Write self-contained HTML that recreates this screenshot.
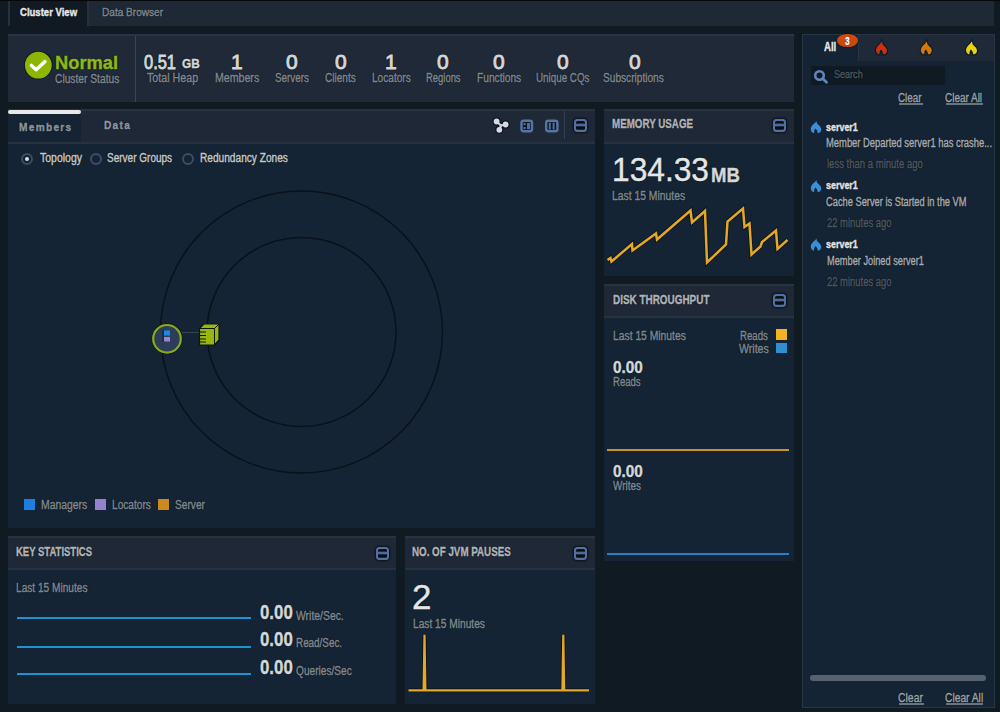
<!DOCTYPE html><html><head><meta charset="utf-8"><style>
*{margin:0;padding:0;box-sizing:border-box}
html,body{width:1000px;height:712px;overflow:hidden;background:#101a22;font-family:"Liberation Sans",sans-serif}
.a{position:absolute}
.t{position:absolute;white-space:nowrap;line-height:1;transform-origin:0 0;text-shadow:0 0 1.5px rgba(0,0,0,.9),0 0 1px rgba(0,0,0,.6);-webkit-text-stroke:0.4px currentColor}
.min{position:absolute;width:13.2px;height:13px;border:2.4px solid #5271a2;border-radius:3.5px;box-shadow:0 0 2px 0.5px rgba(0,0,0,.6);background:linear-gradient(to bottom,#1c2636 0,#080b0e 0.8px,#080b0e 2.4px,#3a5078 2.6px,#4d6a98 3px,#4d6a98 5px,#3a5078 5.4px,#080b0e 5.6px,#080b0e 7.4px,#1c2636 8.2px)}

</style></head><body>
<!-- STATIC SHAPES -->
<!-- top tab bar -->
<div class="a" style="left:0;top:0;width:1000px;height:1.2px;background:#05080b"></div>
<div class="a" style="left:8px;top:1.2px;width:986px;height:25.3px;background:#1f2935"></div>
<div class="a" style="left:7.5px;top:1.2px;width:81.5px;height:25.3px;background:#111a22;border-left:2.5px solid #27313c;border-right:2.5px solid #27313c"></div>
<!-- status bar -->
<div class="a" style="left:8px;top:34px;width:786px;height:68px;background:#1f2937;border-top:2px solid #2a3543"></div>
<div class="a" style="left:135px;top:36px;width:1px;height:66px;background:#3a4654"></div>
<svg class="a" style="left:0;top:0" width="60" height="90">
<circle cx="38.3" cy="65.2" r="14.3" fill="#0c1530"/>
<circle cx="38.3" cy="65.2" r="13.4" fill="#8db600"/>
<polyline points="31.4,65.4 36.2,69.8 45,61.6" fill="none" stroke="#fff" stroke-width="3.4" stroke-linecap="round" stroke-linejoin="round"/>
</svg>
<!-- members panel -->
<div class="a" style="left:8px;top:109px;width:587px;height:419px;background:#152434"></div>
<div class="a" style="left:8px;top:109px;width:587px;height:35px;background:#1e2836;border-top:2px solid #283340;border-bottom:2px solid #263240"></div>
<div class="a" style="left:8px;top:110px;width:73px;height:4px;background:#e8e8e8;border-radius:2px"></div>
<div class="a" style="left:8px;top:114px;width:73px;height:28px;background:#152434"></div>
<div class="a" style="left:564px;top:111px;width:1px;height:28px;background:#334050"></div>
<div class="min" style="left:574px;top:119.3px"></div>
<div class="a" style="left:21px;top:152.5px;width:12px;height:12px;border-radius:50%;border:2px solid #3c4d66"></div>
<div class="a" style="left:25px;top:156.5px;width:4px;height:4px;border-radius:50%;background:#dde"></div>
<div class="a" style="left:90px;top:152.5px;width:12px;height:12px;border-radius:50%;border:2px solid #3c4d66"></div>
<div class="a" style="left:182px;top:152.5px;width:12px;height:12px;border-radius:50%;border:2px solid #3c4d66"></div>
<svg class="a" style="left:0;top:0" width="600" height="530">
<circle cx="301.5" cy="332" r="141" fill="none" stroke="#09111a" stroke-width="1.5"/>
<circle cx="301.5" cy="332" r="94.5" fill="none" stroke="#09111a" stroke-width="1.5"/>
<line x1="182" y1="332.5" x2="200" y2="332.5" stroke="#3a4550" stroke-width="1"/>
<circle cx="167" cy="338.8" r="15.5" fill="#0b1420"/>
<circle cx="167" cy="338.8" r="13.8" fill="#2c3d5a" stroke="#8aaa1c" stroke-width="2.2"/>
<rect x="162" y="330" width="2" height="12" fill="#1e2c40"/>
<rect x="164" y="330.5" width="6" height="5" fill="#1a86f0"/>
<rect x="164" y="337" width="6" height="4.5" fill="#9a85d3"/>
<path d="M199.5 328.5 L204 324 L219 324 L219 340 L214.5 345 L199.5 345 Z" fill="#98b80e" stroke="#0b141b" stroke-width="1.2" stroke-linejoin="round"/>
<path d="M214.5 328.5 L219 324 M214.5 328.5 L214.5 345 M199.5 328.5 L214.5 328.5" stroke="#0b141b" stroke-width="1" fill="none"/>
<path d="M199.5 332 L206 332 M199.5 335.5 L206 335.5 M199.5 339 L206 339 M199.5 342 L206 342" stroke="#0b141b" stroke-width="1" fill="none"/>
</svg>
<div class="a" style="left:24px;top:499px;width:10.5px;height:10.5px;background:#1b80e0"></div>
<div class="a" style="left:95px;top:499px;width:10.5px;height:10.5px;background:#9482cc"></div>
<div class="a" style="left:158px;top:499px;width:10.5px;height:10.5px;background:#cc8a1c"></div>
<!-- memory usage -->
<div class="a" style="left:604px;top:109px;width:190px;height:167px;background:#152434"></div>
<div class="a" style="left:604px;top:109px;width:190px;height:35px;background:#1e2836;border-top:2px solid #283340;border-bottom:2px solid #263240"></div>
<div class="min" style="left:772.8px;top:119.3px"></div>
<svg class="a" style="left:0;top:0" width="800" height="280">
<polyline fill="none" stroke="#0a1220" stroke-width="4.4" stroke-linejoin="miter" stroke-miterlimit="10" opacity="0.8" points="607.5,260 610.5,258 611.5,261.5 632,244 632.5,250.5 656,233.5 657,239.5 690.5,210.5 692,222.5 705,211 707,262.5 726,244.5 727.5,221.5 743,208.5 744.5,227 749.5,223.5 751.5,254.5 760.5,246.5 762,242 776,230.5 777.5,249 787.5,240"/>
<polyline fill="none" stroke="#e5a822" stroke-width="2.5" stroke-linejoin="miter" stroke-miterlimit="10" points="607.5,260 610.5,258 611.5,261.5 632,244 632.5,250.5 656,233.5 657,239.5 690.5,210.5 692,222.5 705,211 707,262.5 726,244.5 727.5,221.5 743,208.5 744.5,227 749.5,223.5 751.5,254.5 760.5,246.5 762,242 776,230.5 777.5,249 787.5,240"/>
</svg>
<!-- disk throughput -->
<div class="a" style="left:604px;top:284px;width:190px;height:277px;background:#152434"></div>
<div class="a" style="left:604px;top:284px;width:190px;height:34px;background:#1e2836;border-top:2px solid #283340;border-bottom:2px solid #263240"></div>
<div class="min" style="left:772.8px;top:293.8px"></div>
<div class="a" style="left:776px;top:329px;width:10.5px;height:10.5px;background:#f0b323"></div>
<div class="a" style="left:776px;top:342.5px;width:10.5px;height:10px;background:#2f8fd0"></div>
<div class="a" style="left:607px;top:449px;width:182px;height:2px;background:#c99423"></div>
<div class="a" style="left:607px;top:553px;width:182px;height:2px;background:#2a7fc0"></div>
<!-- key statistics -->
<div class="a" style="left:8px;top:536px;width:388px;height:168px;background:#152434"></div>
<div class="a" style="left:8px;top:536px;width:388px;height:34px;background:#1e2836;border-top:2px solid #283340;border-bottom:2px solid #263240"></div>
<div class="min" style="left:375.5px;top:546.8px"></div>
<div class="a" style="left:17px;top:617px;width:234px;height:2px;background:#1b95d2"></div>
<div class="a" style="left:17px;top:646px;width:234px;height:2px;background:#1b95d2"></div>
<div class="a" style="left:17px;top:673px;width:234px;height:2px;background:#1b95d2"></div>
<!-- jvm pauses -->
<div class="a" style="left:405px;top:536px;width:190px;height:168px;background:#152434"></div>
<div class="a" style="left:405px;top:536px;width:190px;height:34px;background:#1e2836;border-top:2px solid #283340;border-bottom:2px solid #263240"></div>
<div class="min" style="left:573.9px;top:546.8px"></div>
<svg class="a" style="left:0;top:0" width="600" height="712">
<polyline fill="none" stroke="#0a1220" stroke-width="4" stroke-miterlimit="40" points="408.5,690.3 423.6,690.3 424.5,634.8 425.4,690.3 562.4,690.3 563.3,634.8 564.2,690.3 589,690.3"/>
<polyline fill="none" stroke="#e3a824" stroke-width="2.2" stroke-miterlimit="40" points="408.5,690.3 423.6,690.3 424.5,634.8 425.4,690.3 562.4,690.3 563.3,634.8 564.2,690.3 589,690.3"/>
</svg>
<!-- alerts panel -->
<div class="a" style="left:802px;top:33.5px;width:193px;height:674.5px;background:#152434;border:1.5px solid #283644"></div>
<div class="a" style="left:857.5px;top:35px;width:136px;height:25.6px;background:#1f2937;border-left:1px solid #283442"></div>
<div class="a" style="left:837px;top:34px;width:20.5px;height:12.8px;border-radius:50%;background:#cf4a0a;box-shadow:0 0 1.5px 0.5px rgba(5,20,30,.8)"></div>
<div class="a" style="left:811px;top:66px;width:134px;height:19px;background:#0f1a23"></div>
<div class="a" style="left:899px;top:103px;width:24px;height:2px;background:#6a747e"></div>
<div class="a" style="left:945.5px;top:103px;width:37.5px;height:2px;background:#6a747e"></div>
<div class="a" style="left:810px;top:675px;width:176px;height:6px;border-radius:3px;background:#56636e"></div>
<div class="a" style="left:898.5px;top:703px;width:25px;height:2px;background:#6a747e"></div>
<div class="a" style="left:945.5px;top:703px;width:37.5px;height:2px;background:#6a747e"></div>
<svg class="a" style="left:0;top:0" width="1000" height="712">
<defs><path id="fl" d="M5.7 0 C6.3 1.2 6.4 2.6 7 3.4 C9 5.3 11 7 11 9.3 C11 11.3 9.8 12.6 8.5 13 L7.2 13 C7.2 11.4 6.3 9.6 4.9 8.3 C3.8 9.6 3.3 11.4 3.5 13 L2.5 13 C1 12.3 0 10.8 0 8.8 C0 6.2 2.2 4.2 3.6 2.9 C4.6 2 5.4 1 5.7 0 Z"/></defs>
<g transform="translate(876,41.3)"><use href="#fl" fill="none" stroke="#0b1a28" stroke-width="2.2"/><use href="#fl" fill="#c8320e"/></g>
<g transform="translate(920.8,41.3)"><use href="#fl" fill="none" stroke="#0b1a28" stroke-width="2.2"/><use href="#fl" fill="#d5780c"/></g>
<g transform="translate(966,41.3)"><use href="#fl" fill="none" stroke="#0b1a28" stroke-width="2.2"/><use href="#fl" fill="#e8d213"/></g>
<g transform="translate(810.8,120.9) scale(0.95,0.93)"><use href="#fl" fill="#3a8fd6"/></g>
<g transform="translate(810.8,179.9) scale(0.95,0.93)"><use href="#fl" fill="#3a8fd6"/></g>
<g transform="translate(810.8,238.4) scale(0.95,0.93)"><use href="#fl" fill="#3a8fd6"/></g>
<circle cx="819.5" cy="75.5" r="4.3" fill="none" stroke="#5f84bf" stroke-width="2.6"/>
<line x1="822.5" y1="78.5" x2="826.5" y2="82.3" stroke="#5f84bf" stroke-width="2.8" stroke-linecap="round"/>
<g stroke="#0a1120" stroke-width="4.5" stroke-linecap="round"><line x1="496.6" y1="121.5" x2="501" y2="125.5"/><line x1="505.6" y1="124.5" x2="501" y2="125.5"/><line x1="499.3" y1="129.8" x2="501" y2="125.5"/></g>
<g fill="#0a1120"><circle cx="496.6" cy="121.5" r="4"/><circle cx="505.6" cy="124.5" r="4"/><circle cx="499.3" cy="129.8" r="4"/></g>
<g stroke="#d0d4de" stroke-width="2.2" stroke-linecap="round"><line x1="496.6" y1="121.5" x2="501" y2="125.5"/><line x1="505.6" y1="124.5" x2="501" y2="125.5"/><line x1="499.3" y1="129.8" x2="501" y2="125.5"/></g>
<g fill="#d6dae4"><circle cx="496.6" cy="121.5" r="2.9"/><circle cx="505.6" cy="124.5" r="2.9"/><circle cx="499.3" cy="129.8" r="2.9"/></g>
<rect x="521.5" y="120.8" width="10.5" height="10.4" rx="2.2" fill="#0e151c" stroke="#5575a5" stroke-width="2.4"/>
<rect x="523.5" y="123" width="2.2" height="2.2" fill="#4f6f9f"/><rect x="523.5" y="127" width="2.2" height="2.2" fill="#4f6f9f"/><rect x="527" y="123" width="3" height="6.2" fill="#4f6f9f"/>
<rect x="546.2" y="120.8" width="11.2" height="10.4" rx="2.2" fill="#0e151c" stroke="#5575a5" stroke-width="2.4"/>
<rect x="548.8" y="122.6" width="2" height="7" fill="#4f6f9f"/><rect x="552.6" y="122.6" width="2" height="7" fill="#4f6f9f"/>
</svg>

<div class="t" id="cv" style="left:20.00px;top:6.60px;font-size:11px;font-weight:bold;color:#e6e8ea;transform:scaleX(0.8675);">Cluster View</div>
<div class="t" id="db" style="left:102.20px;top:6.80px;font-size:11px;font-weight:normal;color:#7d8892;transform:scaleX(0.9160);">Data Browser</div>
<div class="t" id="normal" style="left:55.00px;top:54.40px;font-size:18px;font-weight:bold;color:#8db81a;transform:scaleX(1.0167);">Normal</div>
<div class="t" id="cstat" style="left:55.00px;top:72.60px;font-size:12px;font-weight:normal;color:#7f8891;transform:scaleX(0.8533);">Cluster Status</div>
<div class="t" id="heap" style="left:144.00px;top:52.00px;font-size:20px;font-weight:normal;color:#d4d7da;transform:scaleX(0.8205);-webkit-text-stroke:0.9px currentColor">0.51</div>
<div class="t" id="gb" style="left:181.80px;top:57.40px;font-size:13px;font-weight:bold;color:#d4d7da;transform:scaleX(0.9100);">GB</div>
<div class="t" id="theap" style="left:146.80px;top:71.60px;font-size:12px;font-weight:normal;color:#7f8891;transform:scaleX(0.8924);">Total Heap</div>
<div class="t" id="sn0" style="left:231.00px;top:50.60px;font-size:21px;font-weight:normal;color:#d4d7da;transform:scaleX(1.0000);-webkit-text-stroke:0.9px currentColor">1</div>
<div class="t" id="sl0" style="left:215.20px;top:72.00px;font-size:12px;font-weight:normal;color:#7f8891;transform:scaleX(0.8838);">Members</div>
<div class="t" id="sn1" style="left:286.00px;top:50.60px;font-size:21px;font-weight:normal;color:#d4d7da;transform:scaleX(1.0000);-webkit-text-stroke:0.9px currentColor">0</div>
<div class="t" id="sl1" style="left:275.20px;top:72.00px;font-size:12px;font-weight:normal;color:#7f8891;transform:scaleX(0.8201);">Servers</div>
<div class="t" id="sn2" style="left:335.00px;top:50.60px;font-size:21px;font-weight:normal;color:#d4d7da;transform:scaleX(1.0000);-webkit-text-stroke:0.9px currentColor">0</div>
<div class="t" id="sl2" style="left:325.00px;top:72.00px;font-size:12px;font-weight:normal;color:#7f8891;transform:scaleX(0.8378);">Clients</div>
<div class="t" id="sn3" style="left:385.00px;top:50.60px;font-size:21px;font-weight:normal;color:#d4d7da;transform:scaleX(1.0000);-webkit-text-stroke:0.9px currentColor">1</div>
<div class="t" id="sl3" style="left:371.80px;top:72.00px;font-size:12px;font-weight:normal;color:#7f8891;transform:scaleX(0.8425);">Locators</div>
<div class="t" id="sn4" style="left:437.00px;top:50.60px;font-size:21px;font-weight:normal;color:#d4d7da;transform:scaleX(1.0000);-webkit-text-stroke:0.9px currentColor">0</div>
<div class="t" id="sl4" style="left:425.60px;top:72.00px;font-size:12px;font-weight:normal;color:#7f8891;transform:scaleX(0.7854);">Regions</div>
<div class="t" id="sn5" style="left:493.00px;top:50.60px;font-size:21px;font-weight:normal;color:#d4d7da;transform:scaleX(1.0000);-webkit-text-stroke:0.9px currentColor">0</div>
<div class="t" id="sl5" style="left:476.60px;top:72.00px;font-size:12px;font-weight:normal;color:#7f8891;transform:scaleX(0.8500);">Functions</div>
<div class="t" id="sn6" style="left:557.00px;top:50.60px;font-size:21px;font-weight:normal;color:#d4d7da;transform:scaleX(1.0000);-webkit-text-stroke:0.9px currentColor">0</div>
<div class="t" id="sl6" style="left:535.60px;top:72.00px;font-size:12px;font-weight:normal;color:#7f8891;transform:scaleX(0.8177);">Unique CQs</div>
<div class="t" id="sn7" style="left:629.00px;top:50.60px;font-size:21px;font-weight:normal;color:#d4d7da;transform:scaleX(1.0000);-webkit-text-stroke:0.9px currentColor">0</div>
<div class="t" id="sl7" style="left:603.40px;top:72.00px;font-size:12px;font-weight:normal;color:#7f8891;transform:scaleX(0.8436);">Subscriptions</div>
<div class="t" id="mem" style="left:19.00px;top:122.00px;font-size:11px;font-weight:bold;color:#8a95a0;transform:scaleX(0.9206);letter-spacing:1.4px">Members</div>
<div class="t" id="data" style="left:103.60px;top:119.80px;font-size:11px;font-weight:bold;color:#8a95a0;transform:scaleX(0.9210);letter-spacing:1.4px">Data</div>
<div class="t" id="r1" style="left:39.80px;top:152.40px;font-size:12px;font-weight:normal;color:#c4c8cc;transform:scaleX(0.8750);">Topology</div>
<div class="t" id="r2" style="left:107.20px;top:152.40px;font-size:12px;font-weight:normal;color:#c4c8cc;transform:scaleX(0.8347);">Server Groups</div>
<div class="t" id="r3" style="left:200.00px;top:152.40px;font-size:12px;font-weight:normal;color:#c4c8cc;transform:scaleX(0.8448);">Redundancy Zones</div>
<div class="t" id="lg1" style="left:41.00px;top:498.60px;font-size:12px;font-weight:normal;color:#7f8891;transform:scaleX(0.8658);">Managers</div>
<div class="t" id="lg2" style="left:112.40px;top:498.60px;font-size:12px;font-weight:normal;color:#7f8891;transform:scaleX(0.8444);">Locators</div>
<div class="t" id="lg3" style="left:175.00px;top:498.60px;font-size:12px;font-weight:normal;color:#7f8891;transform:scaleX(0.8472);">Server</div>
<div class="t" id="muh" style="left:612.00px;top:117.40px;font-size:13px;font-weight:bold;color:#b0b4ba;transform:scaleX(0.7528);">MEMORY USAGE</div>
<div class="t" id="mnum" style="left:612.00px;top:152.20px;font-size:34px;font-weight:normal;color:#e4e6e8;transform:scaleX(0.9325);">134.33</div>
<div class="t" id="mmb" style="left:711.00px;top:164.60px;font-size:20px;font-weight:bold;color:#d4d7da;transform:scaleX(0.9273);">MB</div>
<div class="t" id="ml15" style="left:612.00px;top:189.60px;font-size:12px;font-weight:normal;color:#7f8891;transform:scaleX(0.8625);">Last 15 Minutes</div>
<div class="t" id="dth" style="left:612.60px;top:292.80px;font-size:13px;font-weight:bold;color:#b0b4ba;transform:scaleX(0.7630);">DISK THROUGHPUT</div>
<div class="t" id="dl15" style="left:612.60px;top:329.80px;font-size:12px;font-weight:normal;color:#7f8891;transform:scaleX(0.8602);">Last 15 Minutes</div>
<div class="t" id="drd" style="left:740.00px;top:329.80px;font-size:12px;font-weight:normal;color:#7f8891;transform:scaleX(0.8051);">Reads</div>
<div class="t" id="dwr" style="left:739.00px;top:343.20px;font-size:12px;font-weight:normal;color:#7f8891;transform:scaleX(0.8797);">Writes</div>
<div class="t" id="d0a" style="left:612.60px;top:360.20px;font-size:16px;font-weight:bold;color:#d4d7da;transform:scaleX(0.9571);">0.00</div>
<div class="t" id="drd2" style="left:612.60px;top:375.60px;font-size:12px;font-weight:normal;color:#7f8891;transform:scaleX(0.7971);">Reads</div>
<div class="t" id="d0b" style="left:612.60px;top:464.20px;font-size:16px;font-weight:bold;color:#d4d7da;transform:scaleX(0.9571);">0.00</div>
<div class="t" id="dwr2" style="left:612.60px;top:479.80px;font-size:12px;font-weight:normal;color:#7f8891;transform:scaleX(0.8235);">Writes</div>
<div class="t" id="ksh" style="left:16.40px;top:544.80px;font-size:13px;font-weight:bold;color:#b0b4ba;transform:scaleX(0.7308);">KEY STATISTICS</div>
<div class="t" id="kl15" style="left:16.40px;top:582.20px;font-size:12px;font-weight:normal;color:#7f8891;transform:scaleX(0.8440);">Last 15 Minutes</div>
<div class="t" id="k0a" style="left:259.80px;top:600.60px;font-size:21px;font-weight:bold;color:#d4d7da;transform:scaleX(0.8027);">0.00</div>
<div class="t" id="kla" style="left:296.00px;top:609.60px;font-size:12px;font-weight:normal;color:#7f8891;transform:scaleX(0.8662);">Write/Sec.</div>
<div class="t" id="k0b" style="left:259.80px;top:627.80px;font-size:21px;font-weight:bold;color:#d4d7da;transform:scaleX(0.8027);">0.00</div>
<div class="t" id="klb" style="left:296.00px;top:636.60px;font-size:12px;font-weight:normal;color:#7f8891;transform:scaleX(0.8230);">Read/Sec.</div>
<div class="t" id="k0c" style="left:259.80px;top:655.80px;font-size:21px;font-weight:bold;color:#d4d7da;transform:scaleX(0.8027);">0.00</div>
<div class="t" id="klc" style="left:296.00px;top:664.60px;font-size:12px;font-weight:normal;color:#7f8891;transform:scaleX(0.8443);">Queries/Sec</div>
<div class="t" id="jvh" style="left:412.20px;top:545.40px;font-size:13px;font-weight:bold;color:#b0b4ba;transform:scaleX(0.7526);">NO. OF JVM PAUSES</div>
<div class="t" id="j2" style="left:412.00px;top:578.60px;font-size:35px;font-weight:normal;color:#e4e6e8;transform:scaleX(1.0000);">2</div>
<div class="t" id="jl15" style="left:413.00px;top:617.80px;font-size:12px;font-weight:normal;color:#7f8891;transform:scaleX(0.8492);">Last 15 Minutes</div>
<div class="t" id="all" style="left:824.00px;top:40.60px;font-size:12px;font-weight:bold;color:#e6e8ea;transform:scaleX(0.8000);">All</div>
<div class="t" id="srch" style="left:834.00px;top:70.00px;font-size:10px;font-weight:normal;color:#4a5561;transform:scaleX(0.9054);">Search</div>
<div class="t" id="cl1" style="left:898.40px;top:91.60px;font-size:12px;font-weight:normal;color:#9aa1a8;transform:scaleX(0.8175);">Clear</div>
<div class="t" id="ca1" style="left:945.00px;top:91.60px;font-size:12px;font-weight:normal;color:#9aa1a8;transform:scaleX(0.8297);">Clear All</div>
<div class="t" id="cl2" style="left:898.20px;top:691.60px;font-size:12px;font-weight:normal;color:#9aa1a8;transform:scaleX(0.8681);">Clear</div>
<div class="t" id="ca2" style="left:945.20px;top:691.60px;font-size:12px;font-weight:normal;color:#9aa1a8;transform:scaleX(0.8541);">Clear All</div>
<div class="t" id="s1" style="left:826.40px;top:122.20px;font-size:11px;font-weight:bold;color:#e2e4e6;transform:scaleX(0.8127);">server1</div>
<div class="t" id="m1" style="left:826.40px;top:136.60px;font-size:12px;font-weight:normal;color:#a4abb2;transform:scaleX(0.7829);">Member Departed server1 has crashe...</div>
<div class="t" id="t1" style="left:827.20px;top:157.80px;font-size:12px;font-weight:normal;color:#4d5863;transform:scaleX(0.7936);">less than a minute ago</div>
<div class="t" id="s2" style="left:826.40px;top:180.00px;font-size:11px;font-weight:bold;color:#e2e4e6;transform:scaleX(0.8127);">server1</div>
<div class="t" id="m2" style="left:826.40px;top:196.00px;font-size:12px;font-weight:normal;color:#a4abb2;transform:scaleX(0.7744);">Cache Server is Started in the VM</div>
<div class="t" id="t2" style="left:827.00px;top:216.60px;font-size:12px;font-weight:normal;color:#4d5863;transform:scaleX(0.7858);">22 minutes ago</div>
<div class="t" id="s3" style="left:826.40px;top:238.80px;font-size:11px;font-weight:bold;color:#e2e4e6;transform:scaleX(0.8127);">server1</div>
<div class="t" id="m3" style="left:827.00px;top:254.80px;font-size:12px;font-weight:normal;color:#a4abb2;transform:scaleX(0.7692);">Member Joined server1</div>
<div class="t" id="t3" style="left:827.00px;top:275.80px;font-size:12px;font-weight:normal;color:#4d5863;transform:scaleX(0.7858);">22 minutes ago</div>
<div class="t" id="b3" style="left:845.00px;top:37.20px;font-size:10px;font-weight:bold;color:#ffffff;transform:scaleX(0.8333);">3</div>
</body></html>
